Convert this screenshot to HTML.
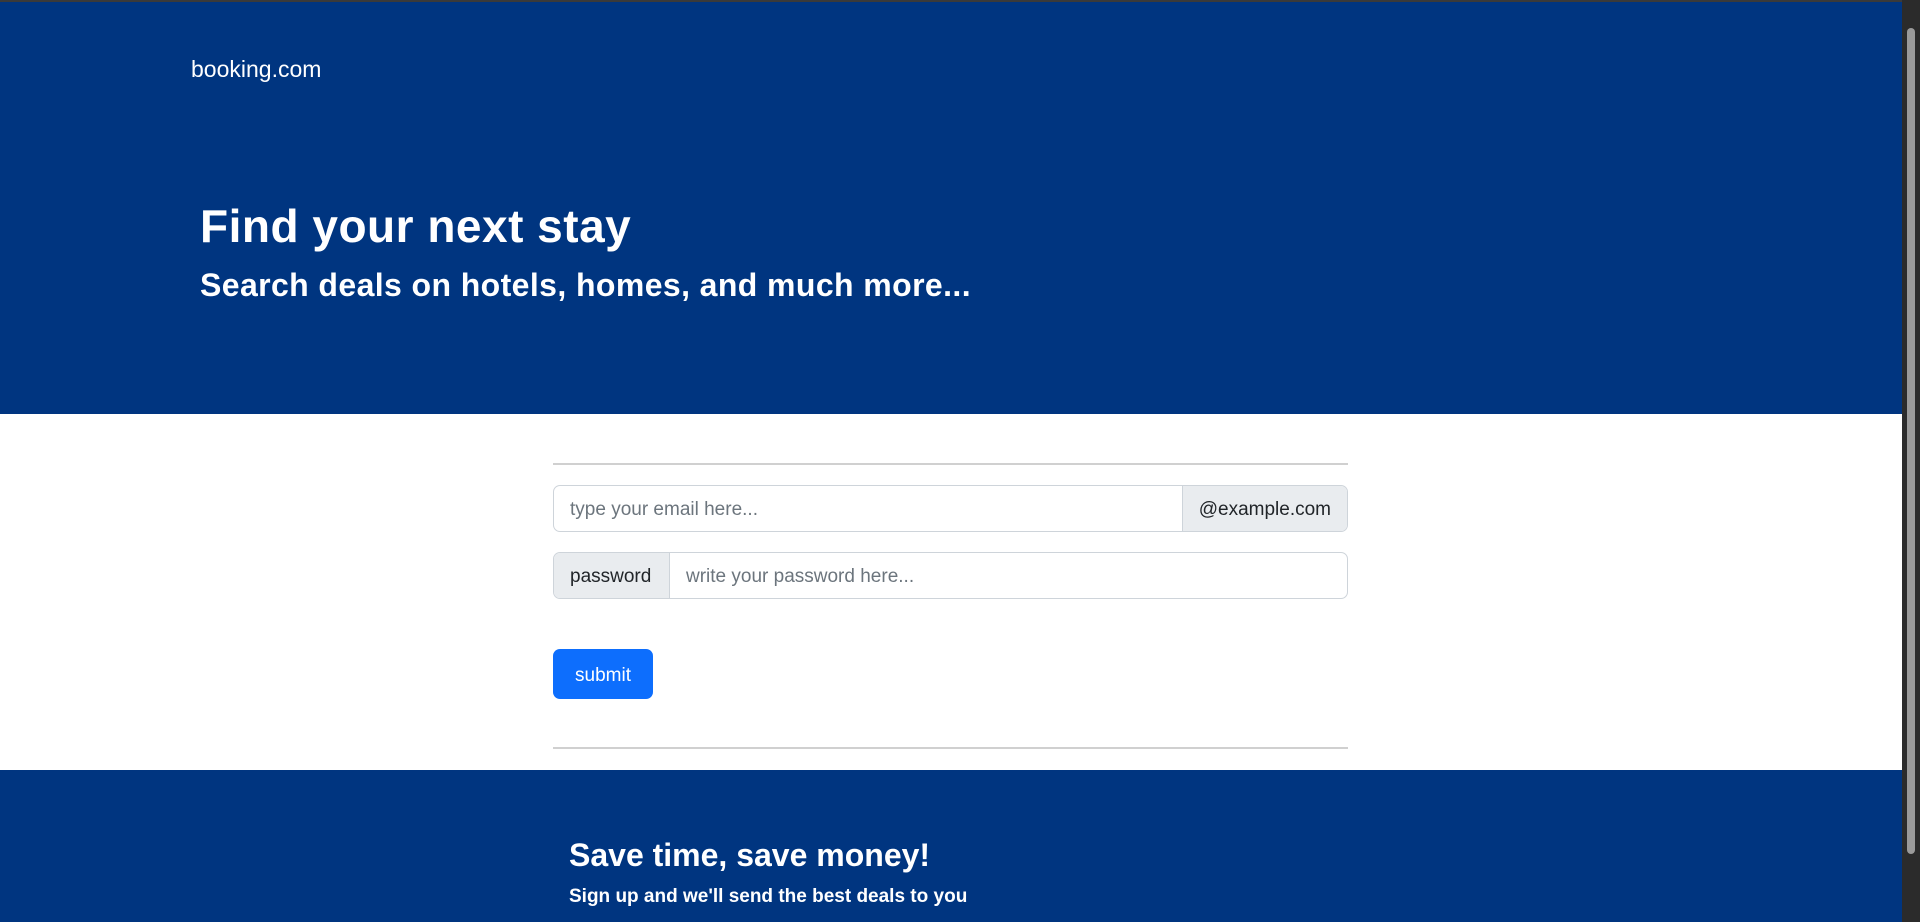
<!DOCTYPE html>
<html><head><style>
*{box-sizing:border-box;margin:0;padding:0}
html,body{width:1920px;height:922px;overflow:hidden;background:#fff;font-family:"Liberation Sans",sans-serif}
.top{position:absolute;left:0;top:0;width:1902px;height:2px;background:#3a3a3a}
.hero{position:absolute;left:0;top:2px;width:1902px;height:412px;background:#003580;color:#fff}
.logo{position:absolute;left:191px;top:54px;font-size:23px}
h1{position:absolute;left:200px;top:197px;font-size:46px;font-weight:bold;letter-spacing:0.5px}
h2{position:absolute;left:200px;top:265px;font-size:32px;font-weight:bold;letter-spacing:0.4px}
hr{position:absolute;left:553px;width:795px;border:0;border-top:2px solid #d0d0d0}
.row{position:absolute;left:553px;width:795px;height:47px;border:1.5px solid #ced4da;border-radius:7px;overflow:hidden;display:flex;font-size:19px}
.add{background:#e9ecef;color:#212529;display:flex;align-items:center;padding:3px 16px 0}
.inp{flex:1;color:#6c757d;display:flex;align-items:center;padding:3px 16px 0}
.btn{position:absolute;left:553px;top:649px;width:100px;height:50px;background:#0d6efd;border-radius:7px;color:#fff;font-size:19px;display:flex;align-items:center;justify-content:center;padding-top:3px}
.foot{position:absolute;left:0;top:770px;width:1902px;height:152px;background:#003580;color:#fff}
.foot .a{position:absolute;left:569px;top:67px;font-size:32px;font-weight:bold}
.foot .b{position:absolute;left:569px;top:116px;font-size:19px;font-weight:bold}
.sb{position:absolute;left:1902px;top:0;width:18px;height:922px;background:#2b2b2b}
.th{position:absolute;left:1907px;top:28px;width:8px;height:826px;background:#9a9a9a;border-radius:4px}
</style></head><body>
<div class="top"></div>
<div class="hero">
<div class="logo">booking.com</div>
<h1>Find your next stay</h1>
<h2>Search deals on hotels, homes, and much more...</h2>
</div>
<hr style="top:463px">
<div class="row" style="top:485px"><div class="inp">type your email here...</div><div class="add" style="border-left:1.5px solid #ced4da">@example.com</div></div>
<div class="row" style="top:552px"><div class="add" style="width:116px;border-right:1.5px solid #ced4da">password</div><div class="inp">write your password here...</div></div>
<div class="btn">submit</div>
<hr style="top:747px">
<div class="foot"><div class="a">Save time, save money!</div><div class="b">Sign up and we'll send the best deals to you</div></div>
<div class="sb"></div><div class="th"></div>
</body></html>
